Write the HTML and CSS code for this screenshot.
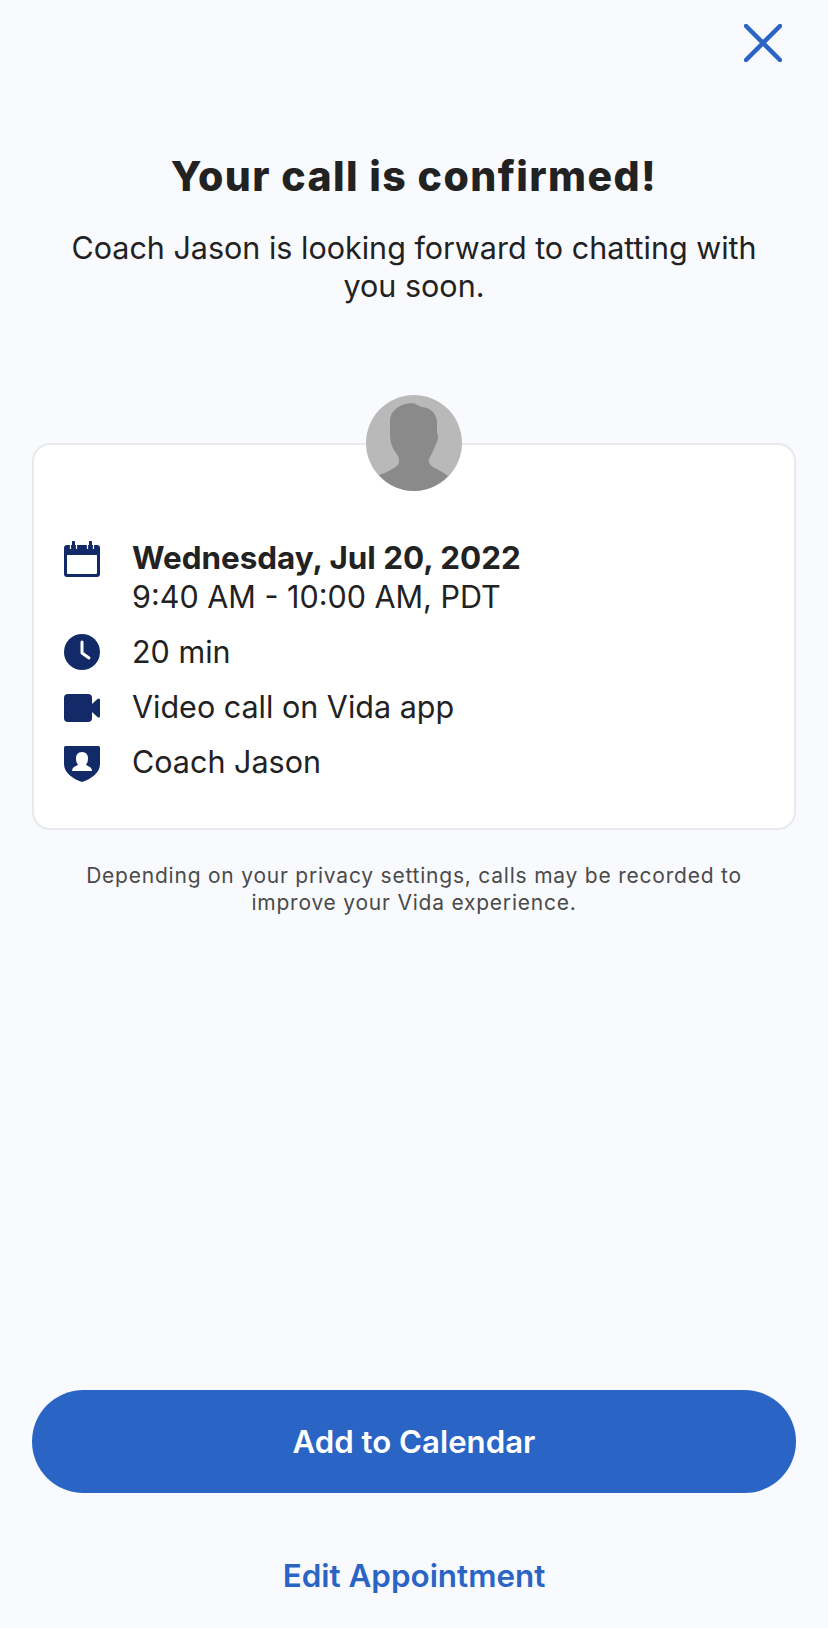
FILE: index.html
```html
<!DOCTYPE html>
<html lang="en">
<head>
  <meta charset="UTF-8">
  <meta name="viewport" content="width=device-width, initial-scale=1">
  <title>Your call is confirmed!</title>
  <link rel="stylesheet" href="styles.css">
</head>
<body>
  <div class="screen">
    <div class="top-bar">
      <button class="close-btn" aria-label="Close">
        <svg width="38" height="38" viewBox="0 0 38 38"><path d="M2 2 L36 36 M36 2 L2 36" fill="none" stroke="#2a65c5" stroke-width="4.500" stroke-linecap="round"/></svg>
      </button>
    </div>

    <h1 class="title">Your call is confirmed!</h1>
    <p class="subtitle">Coach Jason is looking forward to chatting with you soon.</p>

    <div class="card-wrap">
      <!-- avatar sits over the card's top edge -->
      <div class="avatar">
        <svg width="96" height="96" viewBox="0 0 96 96">
          <circle cx="48" cy="48" r="48" fill="#b9b9b9"/>
          <path d="M13 80 C20 78 27 74 32 70 C34 66 33 62 30 58 C26 53 24 47 24 40 L24 26 C24 16 33 9 45 8 C50 8 52 11 56 12 C64 13 70 17 71 27 L71 38 C73 40 72 46 70 49 C68 54 65 60 63 64 C62 67 64 70 67 72 C73 75 78 78 82 81 C73 90 61 96 48 96 C34 96 22 90 13 80 Z" fill="#8a8a8a"/>
        </svg>
      </div>
      <div class="card">
        <div class="row row-date">
          <svg class="icon" width="36" height="36" viewBox="0 0 36 36">
            <path d="M8 1 a1.500 1.500 0 0 1 3 0 V4 H25 V1 a1.500 1.500 0 0 1 3 0 V4 H33 a3 3 0 0 1 3 3 V33 a3 3 0 0 1 -3 3 H3 a3 3 0 0 1 -3 -3 V7 a3 3 0 0 1 3 -3 H8 Z M3 14 V32 a1 1 0 0 0 1 1 H32 a1 1 0 0 0 1 -1 V14 Z" fill="#122b68" fill-rule="evenodd"/>
            <path d="M6.500 3 V8 M12.500 3 V8 M23.500 3 V8 M29.500 3 V8" stroke="#fff" stroke-width="1.200" fill="none"/>
          </svg>
          <div class="row-text">
            <div class="date">Wednesday, Jul 20, 2022</div>
            <div>9:40 AM - 10:00 AM, PDT</div>
          </div>
        </div>
        <div class="row">
          <svg class="icon" width="36" height="36" viewBox="0 0 36 36">
            <circle cx="18" cy="18" r="18" fill="#122b68"/>
            <path d="M18 8 V19 L25 24" fill="none" stroke="#fff" stroke-width="3" stroke-linecap="round" stroke-linejoin="round"/>
          </svg>
          <div class="row-text">20 min</div>
        </div>
        <div class="row">
          <svg class="icon icon-video" width="36" height="28" viewBox="0 0 36 28">
            <rect x="0" y="0" width="28" height="28" rx="4" fill="#122b68"/>
            <path d="M28 10 L33.500 5 Q36 3.500 36 6 V22 Q36 24.500 33.500 23 L28 18 Z" fill="#122b68"/>
          </svg>
          <div class="row-text">Video call on Vida app</div>
        </div>
        <div class="row">
          <svg class="icon icon-shield" width="36" height="36" viewBox="0 0 36 36">
            <path d="M1.500 0 H34.500 Q36 0 36 1.500 V18 C36 27 27 33 18 36 C9 33 0 27 0 18 V1.500 Q0 0 1.500 0 Z" fill="#122b68"/>
            <path d="M18 6 C22 6 24 9 24 12 C24 15 23.500 17 22 18.500 C23 20 26 20.500 27 22 Q28 23.500 28 25 H8 Q8 23.500 9 22 C10 20.500 13 20 14 18.500 C12.500 17 12 15 12 12 C12 9 14 6 18 6 Z" fill="#fff"/>
          </svg>
          <div class="row-text">Coach Jason</div>
        </div>
      </div>
    </div>

    <p class="note">Depending on your privacy settings, calls may be recorded to improve your Vida experience.</p>

    <div class="actions">
      <button class="primary-btn">Add to Calendar</button>
      <a class="edit-link" href="#">Edit Appointment</a>
    </div>
  </div>
</body>
</html>
```

FILE: styles.css
```css
* {
  box-sizing: border-box;
}
html, body {
  height: 100%;
}
body {
  margin: 0;
  background: #f9fafe;
  color: #222;
  font-family: Inter, "Liberation Sans", sans-serif;
}
.screen {
  display: flex;
  flex-direction: column;
  height: 1628px;
  padding: 0 32px;
}
.top-bar {
  display: flex;
  justify-content: flex-end;
  padding-top: 24px;
  margin-right: -1px;
}
.close-btn {
  display: block;
  width: 53px;
  height: 38px;
  padding: 0;
  border: none;
  background: none;
  text-align: left;
}
.close-btn svg {
  display: block;
}
.title {
  margin: 91px 0 0;
  font-size: 41px;
  font-weight: 800;
  letter-spacing: 1.4px;
  line-height: 46px;
  text-align: center;
}
.subtitle {
  margin: 30px auto 0;
  width: 720px;
  font-size: 30.5px;
  font-weight: 400;
  line-height: 38px;
  text-align: center;
}
.card-wrap {
  position: relative;
  margin-top: 90px;
  padding-top: 48px;
}
.avatar {
  position: absolute;
  top: 0;
  left: 50%;
  margin-left: -48px;
  width: 96px;
  height: 96px;
}
.avatar svg {
  display: block;
}
.card {
  display: flex;
  flex-direction: column;
  gap: 19px;
  height: 387px;
  padding: 95px 30px 0;
  background: #fff;
  border: 2px solid #e8e9ec;
  border-radius: 18px;
}
.row {
  display: flex;
  align-items: center;
  font-size: 30.5px;
  line-height: 36px;
}
.row-date {
  align-items: flex-start;
}
.row-date .icon {
  margin-top: 1px;
}
.icon {
  flex: none;
  margin-right: 32px;
}
.icon-video {
  margin-top: 1px;
}
.icon-shield {
  margin-top: 2px;
  margin-bottom: -2px;
}
.row-text {
  min-width: 0;
}
.date {
  margin-bottom: 3px;
  font-size: 31.4px;
  font-weight: 700;
}
.note {
  margin: 32px auto 0;
  width: 680px;
  color: #4a4a4a;
  font-size: 21px;
  letter-spacing: 0.78px;
  line-height: 27px;
  text-align: center;
}
.actions {
  display: flex;
  flex-direction: column;
  align-items: center;
  margin-top: auto;
  padding-bottom: 34px;
}
.primary-btn {
  width: 100%;
  height: 103px;
  border: none;
  border-radius: 52px;
  background: #2a65c5;
  color: #fff;
  font-family: inherit;
  font-size: 31.2px;
  font-weight: 600;
}
.edit-link {
  margin-top: 65px;
  color: #2a65c5;
  font-size: 31.4px;
  font-weight: 600;
  line-height: 36px;
  text-decoration: none;
}
```
